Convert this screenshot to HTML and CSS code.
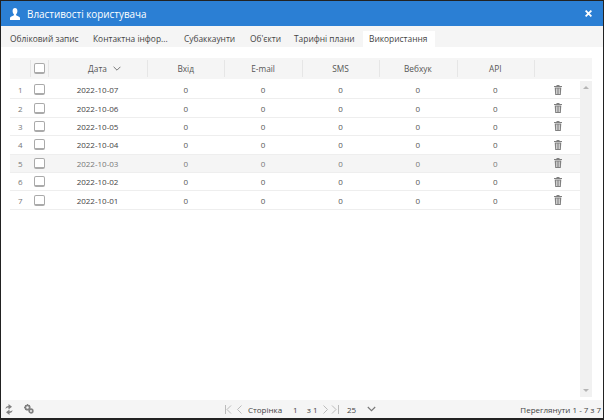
FILE: index.html
```html
<!DOCTYPE html>
<html lang="uk">
<head>
    <meta charset="UTF-8">
    <title>Властивості користувача</title>
    <link rel="stylesheet" href="styles.css">
</head>
<body>
    <div class="window">
        <header class="title-bar">
            <svg class="user-icon" width="10" height="12" viewBox="0 0 10 12"><path fill="#fff" d="M5 0C3.500 0 2.600 1.200 2.600 3 2.600 4.500 3.200 5.700 3.900 6.300L3.900 7.300 1 8.700C.3 9 0 9.500 0 10.200L0 12 10 12 10 10.200C10 9.500 9.700 9 9 8.700L6.100 7.300 6.100 6.300C6.800 5.700 7.400 4.500 7.400 3 7.400 1.200 6.500 0 5 0Z"/></svg>
            <span class="title">Властивості користувача</span>
            <svg class="close-icon" width="7" height="7" viewBox="0 0 7 7"><path stroke="#fff" stroke-width="1.800" d="M.6 .6 6.400 6.400M6.400 .6 .6 6.400"/></svg>
        </header>
        <nav class="tabs">
            <a class="tab tab-account">Обліковий запис</a>
            <a class="tab tab-contact">Контактна інфор...</a>
            <a class="tab tab-sub">Субаккаунти</a>
            <a class="tab tab-objects">Об'єкти</a>
            <a class="tab tab-plans">Тарифні плани</a>
            <a class="tab tab-usage active">Використання</a>
        </nav>
        <div class="content">
            <table class="grid">
                <colgroup>
                    <col class="col-num"><col class="col-check"><col class="col-date">
                    <col class="col-val"><col class="col-val"><col class="col-val"><col class="col-val"><col class="col-val">
                    <col>
                </colgroup>
                <thead>
                    <tr>
                        <th></th>
                        <th class="sep"><span class="checkbox"></span></th>
                        <th class="sep"><span class="sort">Дата<svg class="sort-icon" width="8" height="5" viewBox="0 0 8 5"><path fill="none" stroke="#777" d="M.6 .8 4 4.200 7.400 .8"/></svg></span></th>
                        <th class="sep">Вхід</th>
                        <th class="sep">E-mail</th>
                        <th class="sep">SMS</th>
                        <th class="sep">Вебхук</th>
                        <th class="sep">API</th>
                        <th class="sep"></th>
                    </tr>
                </thead>
                <tbody id="rows"></tbody>
            </table>
            <div class="scrollbar">
                <span class="arrow-up"></span>
                <span class="arrow-down"></span>
            </div>
        </div>
        <footer class="pager-bar">
            <div class="tools">
                <svg width="8" height="11" viewBox="0 0 8 11"><path fill="#808080" d="M.5 5C.5 3.200 1.800 2 3.500 2L3.500 0 7 2.800 3.500 5.500 3.500 3.600C2.500 3.600 1.500 4 .5 5ZM7.500 6C7.500 7.800 6.200 9 4.500 9L4.500 11 1 8.200 4.500 5.500 4.500 7.400C5.500 7.400 6.500 7 7.500 6Z"/></svg>
                <svg width="10" height="10" viewBox="0 0 10 10"><circle cx="3.500" cy="3.500" r="2.200" fill="none" stroke="#808080" stroke-width="1.800"/><circle cx="7" cy="7" r="1.800" fill="none" stroke="#808080" stroke-width="1.700"/><path stroke="#808080" d="M3.500 0V1.500M0 3.500H1.500M1 1 2 2M6 1 5 2M1 6 2 5"/></svg>
            </div>
            <div class="pager">
                <svg class="nav-first" width="7" height="9" viewBox="0 0 7 9"><path fill="none" stroke="#bbb" d="M.5 0V9M6 .5 2 4.500 6 8.500"/></svg>
                <svg class="nav-prev" width="5" height="9" viewBox="0 0 5 9"><path fill="none" stroke="#bbb" d="M4.500 .5 .5 4.500 4.500 8.500"/></svg>
                <span class="page-label">Сторінка</span>
                <span class="page-num">1</span>
                <span class="page-of">з 1</span>
                <svg class="nav-next" width="5" height="9" viewBox="0 0 5 9"><path fill="none" stroke="#bbb" d="M.5 .5 4.500 4.500 .5 8.500"/></svg>
                <svg class="nav-last" width="8" height="9" viewBox="0 0 8 9"><path fill="none" stroke="#bbb" d="M7.500 0V9M1 .5 5 4.500 1 8.500"/></svg>
                <span class="page-size">25</span>
                <svg width="9" height="6" viewBox="0 0 9 6"><path fill="none" stroke="#777" stroke-width="1.100" d="M.8 1 4.500 4.700 8.200 1"/></svg>
            </div>
            <div class="summary">Переглянути 1 - 7 з 7</div>
        </footer>
    </div>
    <script>
        var dates = ['2022-10-07', '2022-10-06', '2022-10-05', '2022-10-04', '2022-10-03', '2022-10-02', '2022-10-01'];
        var trash = '<svg width="8" height="10" viewBox="0 0 8 10"><path fill="#808080" fill-rule="evenodd" d="M2.500 0H5.500V1H8V2H0V1H2.500ZM.7 2.500H7.300L6.800 10H1.200ZM2.300 3.500V9H2.900V3.500ZM3.700 3.500V9H4.300V3.500ZM5.100 3.500V9H5.700V3.500Z"/></svg>';
        var html = '';
        dates.forEach(function(date, i) {
            html += '<tr' + (i === 4 ? ' class="hover"' : '') + '>';
            html += '<td class="num">' + (i + 1) + '</td>';
            html += '<td><span class="checkbox"></span></td>';
            html += '<td>' + date + '</td>';
            html += '<td>0</td><td>0</td><td>0</td><td>0</td><td>0</td>';
            html += '<td class="del">' + trash + '</td></tr>';
        });
        document.getElementById('rows').innerHTML = html;
    </script>
</body>
</html>
```

FILE: styles.css
```css
html, body {
    margin: 0;
    padding: 0;
    height: 100%;
}
body {
    background-color: #fff;
    font-family: "Open Sans", sans-serif;
    font-size: 8px;
    color: #444;
    overflow: hidden;
}
.window {
    width: 604px;
    height: 420px;
    box-sizing: border-box;
    border: 1px solid #222;
    border-bottom-width: 2px;
    display: flex;
    flex-direction: column;
}
.title-bar {
    height: 25px;
    flex: none;
    background-color: #2b7fd4;
    display: flex;
    align-items: center;
    padding: 0 11px 0 9px;
    color: #fff;
}
.user-icon {
    margin-right: 7px;
}
.title {
    font-size: 9.900px;
    flex: 1;
}
.tabs {
    height: 21px;
    flex: none;
    box-sizing: border-box;
    padding-top: 5px;
    background-color: #f5f5f5;
    display: flex;
    font-size: 8.400px;
}
.tab {
    display: block;
    line-height: 16px;
    white-space: nowrap;
}
.tab-account { margin-left: 9px; width: 83px; }
.tab-contact { width: 91px; }
.tab-sub { width: 66px; }
.tab-objects { width: 44px; }
.tab-plans { width: 69px; }
.tab-usage {
    width: 72px;
    box-sizing: border-box;
    padding-left: 6px;
}
.tab.active {
    background-color: #fff;
}
.content {
    flex: 1;
    position: relative;
    padding: 11px 11px 0 9px;
    min-height: 0;
}
.grid {
    width: 582px;
    table-layout: fixed;
    border-collapse: separate;
    border-spacing: 0;
}
.col-num { width: 20px; }
.col-check { width: 18px; }
.col-date { width: 99px; }
.col-val { width: 77.400px; }
.grid th {
    height: 21px;
    padding: 0;
    background-color: #f5f5f5;
    background-clip: padding-box;
    border-bottom: 2px solid #fff;
    font-size: 8.300px;
    font-weight: normal;
    text-align: center;
    color: #555;
    position: relative;
}
.grid th.sep::before {
    content: "";
    position: absolute;
    left: 0;
    top: 2px;
    bottom: 2px;
    border-left: 1px solid #e6e6e6;
}
.sort {
    position: relative;
}
.sort-icon {
    position: absolute;
    left: 25px;
    top: 3px;
}
.grid td {
    height: 17.400px;
    padding: 0;
    text-align: center;
    border-bottom: 1px solid #eee;
    color: #555;
    vertical-align: middle;
}
.grid td:nth-child(3) {
    color: #444;
}
.grid tr.hover td {
    background-color: #f5f5f5;
    color: #777;
}
.grid td.num {
    text-align: left;
    padding-left: 8px;
    box-sizing: border-box;
    color: #777;
}
.grid td.del {
    text-align: left;
    padding-left: 20px;
}
.grid td.del svg {
    display: block;
}
.checkbox {
    display: block;
    width: 9px;
    height: 8px;
    margin: 0 auto;
    border: 1px solid #aaa;
    border-bottom-width: 2px;
    border-radius: 2px;
    background-color: #fff;
}
.scrollbar {
    position: absolute;
    top: 34px;
    right: 11px;
    bottom: 3px;
    width: 12px;
    background-color: #f1f1f1;
}
.arrow-up, .arrow-down {
    position: absolute;
    left: 3px;
    width: 0;
    height: 0;
    border-left: 3px solid transparent;
    border-right: 3px solid transparent;
}
.arrow-up {
    top: 5px;
    border-bottom: 3px solid #b5b5b5;
}
.arrow-down {
    bottom: 5px;
    border-top: 3px solid #b5b5b5;
}
.pager-bar {
    height: 18px;
    flex: none;
    background-color: #f5f5f5;
    display: flex;
    align-items: center;
    padding: 0 2px 0 4px;
}
.tools {
    width: 220px;
    display: flex;
    align-items: center;
    gap: 11px;
}
.pager {
    flex: 1;
    display: flex;
    align-items: center;
}
.nav-first { margin-right: 5px; }
.nav-prev { margin-right: 6px; }
.nav-next { margin-right: 3px; }
.nav-last { margin-right: 8px; }
.page-label { width: 45px; }
.page-num { width: 14px; }
.page-of { width: 16px; }
.page-size { width: 20px; }
```
